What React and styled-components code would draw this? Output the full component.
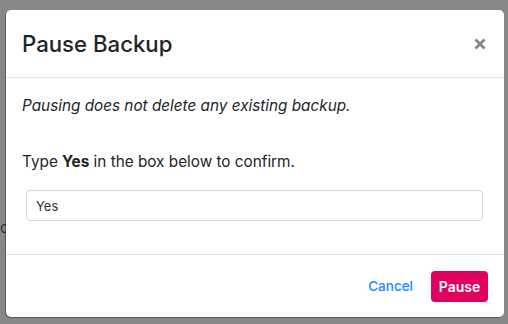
import React, { useState } from 'react';
import styled, { createGlobalStyle } from 'styled-components';

const GlobalStyle = createGlobalStyle`
  html, body {
    margin: 0;
    padding: 0;
    width: 100%;
    height: 100%;
  }
  body {
    font-family: Inter, "Liberation Sans", sans-serif;
    color: #212529;
  }
`;

const Backdrop = styled.div`
  width: 508px;
  height: 324px;
  background-color: #888888;
  padding: 10px 4px 0 6px;
  box-sizing: border-box;
  position: relative;
  overflow: hidden;
`;

const BehindText = styled.span`
  position: absolute;
  left: -42px;
  top: 218px;
  font-size: 15px;
  color: #333;
`;

const Modal = styled.div`
  position: relative;
  width: 498px;
  height: 307px;
  background-color: #fff;
  border-radius: 5px;
  box-shadow: -1px 1px 1px rgba(0, 0, 0, 0.35);
  display: flex;
  flex-direction: column;
  overflow: hidden;
`;

const Header = styled.div`
  height: 68px;
  display: flex;
  align-items: center;
  justify-content: space-between;
  padding: 0 18px 0 16px;
  border-bottom: 1px solid #dee2e6;
  box-sizing: border-box;
`;

const Title = styled.h5`
  margin: 0;
  font-size: 22.2px;
  font-weight: 500;
  color: #212529;
`;

const CloseButton = styled.button`
  border: none;
  background: none;
  padding: 0;
  width: 12px;
  height: 12px;
  display: flex;
  cursor: pointer;
`;

const Body = styled.div`
  flex: 1;
  padding: 16px 16px 0 16px;
`;

const Note = styled.p`
  margin: 0 0 32px 0;
  font-size: 15.3px;
  line-height: 24px;
  font-style: ${(p) => (p.italic ? 'italic' : 'normal')};
`;

const Prompt = styled(Note)`
  margin-bottom: 16px;
`;

const Input = styled.input`
  display: block;
  box-sizing: border-box;
  margin: 0 5px 0 4px;
  width: calc(100% - 9px);
  height: 31px;
  padding: 0 9px;
  border: 1px solid #d5d8dc;
  border-radius: 4px;
  font-family: Inter, "Liberation Sans", sans-serif;
  font-size: 13px;
  color: #333;
  outline: none;
`;

const Footer = styled.div`
  height: 63px;
  box-sizing: border-box;
  border-top: 1px solid #dee2e6;
  display: flex;
  align-items: center;
  justify-content: flex-end;
  gap: 18px;
  padding: 0 16px;
`;

const LinkButton = styled.button`
  border: none;
  background: none;
  padding: 0;
  font-family: Inter, "Liberation Sans", sans-serif;
  font-size: 13.5px;
  font-weight: 500;
  color: #1a8cff;
  cursor: pointer;
`;

const DangerButton = styled.button`
  border: none;
  height: 31px;
  width: 57px;
  padding: 0;
  border-radius: 4px;
  background-color: #e2005e;
  color: #fff;
  font-family: Inter, "Liberation Sans", sans-serif;
  font-size: 14px;
  font-weight: 600;
  cursor: pointer;
`;

const CloseIcon = () => (
  <svg width="12" height="12" viewBox="0 0 12 12">
    <path d="M1.5 1.5 L10.5 10.5 M10.5 1.5 L1.5 10.5" stroke="#858585" strokeWidth="2.8" strokeLinecap="butt" />
  </svg>
);

const App = () => {
  const [value, setValue] = useState('Yes');

  return (
    <>
      <GlobalStyle />
      <Backdrop>
        <BehindText>Product</BehindText>
        <Modal>
          <Header>
            <Title>Pause Backup</Title>
            <CloseButton aria-label="Close">
              <CloseIcon />
            </CloseButton>
          </Header>
          <Body>
            <Note italic>Pausing does not delete any existing backup.</Note>
            <Prompt>
              Type <strong>Yes</strong> in the box below to confirm.
            </Prompt>
            <Input value={value} onChange={(e) => setValue(e.target.value)} />
          </Body>
          <Footer>
            <LinkButton>Cancel</LinkButton>
            <DangerButton>Pause</DangerButton>
          </Footer>
        </Modal>
      </Backdrop>
    </>
  );
};

export default App;
